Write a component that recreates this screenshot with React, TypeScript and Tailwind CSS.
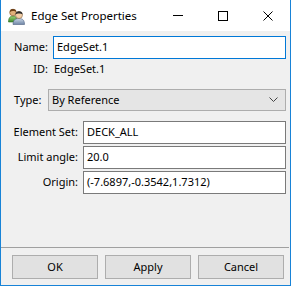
import React from "react";

const font = { fontFamily: '"Segoe UI", "Noto Sans", "Liberation Sans", sans-serif' };

function PeopleIcon() {
  return (
    <svg width="17" height="17" viewBox="0 0 17 17">
      <defs>
        <linearGradient id="g1" x1="0" y1="0" x2="0" y2="1">
          <stop offset="0" stopColor="#9cd27a" />
          <stop offset="1" stopColor="#3f8a2a" />
        </linearGradient>
        <linearGradient id="g2" x1="0" y1="0" x2="0" y2="1">
          <stop offset="0" stopColor="#c9d6e6" />
          <stop offset="1" stopColor="#6f86a6" />
        </linearGradient>
      </defs>
      <path d="M0.5 14 C0.5 9.5 2.5 8 5 8 C7.5 8 9.5 9.5 9.5 14 Z" fill="url(#g1)" stroke="#2e6b22" strokeWidth="0.6" />
      <circle cx="5" cy="4.5" r="3.3" fill="#e0b07a" stroke="#7a4f22" strokeWidth="0.6" />
      <path d="M1.8 4 C1.8 1.5 3.5 1 5 1 C7 1 8.3 2 8.3 4 C7 3 4 2.5 1.8 4 Z" fill="#6b3f17" />
      <path d="M5 16.5 C5 12 7.5 10.5 11 10.5 C14.5 10.5 16.5 12 16.5 16.5 Z" fill="url(#g2)" stroke="#4d6282" strokeWidth="0.6" />
      <circle cx="11" cy="7" r="3.5" fill="#f2cfa8" stroke="#8a6440" strokeWidth="0.6" />
      <path d="M7.5 6.5 C7.5 4 9 3.3 11 3.3 C13 3.3 14.5 4 14.5 6.5 C13 5.3 9 5.3 7.5 6.5 Z" fill="#2a2a2a" />
    </svg>
  );
}

export default function App() {
  return (
    <div
      className="w-[291px] h-[286px] flex flex-col border-x border-b border-[#1883d7] bg-[#f0f0f0] text-[11px] text-black"
      style={font}
    >
      {/* Title bar */}
      <div className="h-[31px] bg-white flex items-center shrink-0">
        <div className="ml-[7px] mt-[1px] w-[17px] h-[17px]">
          <PeopleIcon />
        </div>
        <span className="ml-[6px] text-[11.5px] leading-none">Edge Set Properties</span>
        <div className="flex-1" />
        <div className="w-[45px] h-[31px] flex items-center justify-center">
          <div className="w-[10px] h-[1px] bg-black" />
        </div>
        <div className="w-[45px] h-[31px] flex items-center justify-center">
          <div className="w-[10px] h-[10px] border border-black" />
        </div>
        <div className="w-[45px] h-[31px] flex items-center justify-center">
          <svg width="10" height="10" viewBox="0 0 10 10">
            <path d="M0.5 0.5 L9.5 9.5 M9.5 0.5 L0.5 9.5" stroke="#000" strokeWidth="1" />
          </svg>
        </div>
      </div>

      {/* Body */}
      <div className="flex-1 flex flex-col pr-[4px]">
        <div className="flex items-center h-[23px] mt-[5px]">
          <span className="w-[47px] text-right">Name:</span>
          <div className="ml-[5px] flex-1 h-[23px] border border-[#0078d7] bg-white flex items-center pl-[3px]">
            EdgeSet.1
          </div>
        </div>
        <div className="flex items-center h-[20px]">
          <span className="w-[47px] text-right">ID:</span>
          <span className="ml-[6px]">EdgeSet.1</span>
        </div>
        <div className="flex items-center h-[22px] mt-[10px]">
          <span className="w-[42px] pl-[13px]">Type:</span>
          <div className="ml-[5px] flex-1 h-[22px] border border-[#adadad] bg-[#e5e5e5] flex items-center pl-[3px] pr-[7px]">
            <span className="flex-1">By Reference</span>
            <svg width="9" height="6" viewBox="0 0 9 6">
              <path d="M0.5 0.5 L4.5 4.5 L8.5 0.5" stroke="#444" strokeWidth="1" fill="none" />
            </svg>
          </div>
        </div>

        <div className="flex flex-col gap-[2px] mt-[10px]">
          {[
            ["Element Set:", "DECK_ALL"],
            ["Limit angle:", "20.0"],
            ["Origin:", "(-7.6897,-0.3542,1.7312)"],
          ].map(([l, v]) => (
            <div key={l} className="flex items-center h-[23px]">
              <span className="w-[77px] text-right">{l}</span>
              <div className="ml-[5px] flex-1 h-[23px] border border-[#7a7a7a] bg-white flex items-center pl-[3px]">
                {v}
              </div>
            </div>
          ))}
        </div>

        <div className="flex-1" />
      </div>

      <div className="h-[1px] bg-[#a0a0a0] mr-[1px]" />
      <div className="flex gap-[7px] pl-[11px] mt-[7px] mb-[6px]">
        {["OK", "Apply", "Cancel"].map((b) => (
          <div
            key={b}
            className="w-[86px] h-[24px] border border-[#adadad] bg-[#e1e1e1] flex items-center justify-center"
          >
            {b}
          </div>
        ))}
      </div>
    </div>
  );
}
